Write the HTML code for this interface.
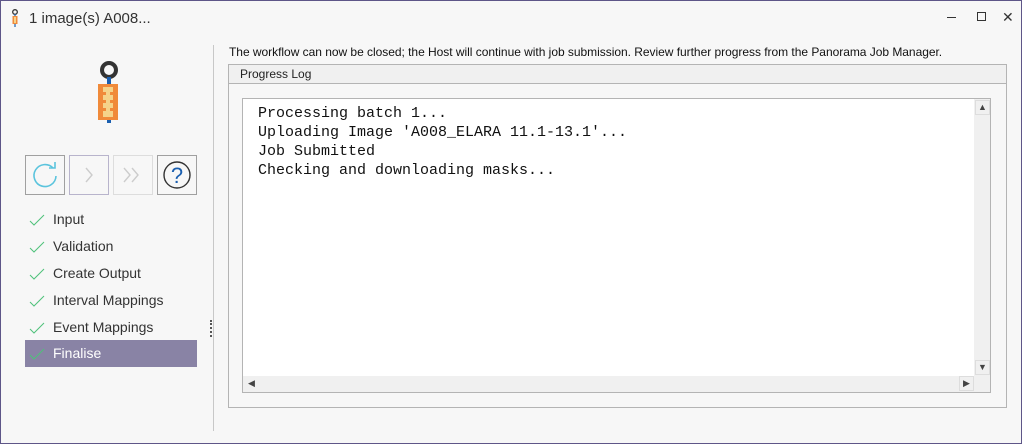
<!DOCTYPE html>
<html><head><style>
*{margin:0;padding:0;box-sizing:border-box}
body{width:1022px;height:444px;background:#f7f7f7;font-family:"Liberation Sans",sans-serif;position:relative;overflow:hidden}
.win{position:absolute;left:0;top:0;width:1022px;height:444px;border:1px solid #5e5688}
.abs{position:absolute}
.btn{position:absolute;top:155px;width:40px;height:40px;border:1px solid #a0a0a0;background:#f7f7f7}
.nav{position:absolute;left:25px;width:172px;height:27px;font-size:14px;color:#333;line-height:27px}
.nav span{position:absolute;left:28px}
.nav svg{position:absolute;left:4px;top:8px}
.log{font-family:"Liberation Mono","DejaVu Sans Mono",monospace;font-size:15px;color:#111;line-height:19px}
.sb{position:absolute;width:15px;height:15px;border:1px solid #ddd;font-size:9px;color:#444;text-align:center;line-height:13px;background:#f0f0f0}
</style></head><body>
<div class="win"></div>
<svg class="abs" style="left:11px;top:9px" width="8" height="18" viewBox="0 0 8 18"><circle cx="4" cy="3" r="2.3" fill="none" stroke="#333" stroke-width="1.3"/><rect x="3.4" y="5" width="1.2" height="13" fill="#1a5fb0"/><rect x="1.5" y="7" width="5" height="8" fill="#f08a3a"/><rect x="3" y="8" width="2" height="6" fill="#f5d38a"/></svg>
<div class="abs" style="left:29px;top:10px;font-size:15px;color:#333">1 image(s) A008...</div>
<div class="abs" style="left:947px;top:17px;width:9px;height:1px;background:#333"></div>
<div class="abs" style="left:977px;top:12px;width:9px;height:9px;border:1px solid #333"></div>
<div class="abs" style="left:1002px;top:9px;font-size:14px;color:#333">✕</div>
<svg class="abs" style="left:98px;top:60px" width="22" height="64" viewBox="0 0 22 64"><circle cx="11" cy="10" r="7" fill="none" stroke="#333" stroke-width="4"/><rect x="9" y="17" width="4" height="46" fill="#1a5fb0"/><rect x="0" y="24" width="20" height="36" fill="#f08a3a"/><rect x="5" y="27" width="10" height="30" fill="#f5d38a"/><rect x="5" y="32" width="3" height="3" fill="#f08a3a"/><rect x="12" y="32" width="3" height="3" fill="#f08a3a"/><rect x="5" y="40" width="3" height="3" fill="#f08a3a"/><rect x="12" y="40" width="3" height="3" fill="#f08a3a"/><rect x="5" y="48" width="3" height="3" fill="#f08a3a"/><rect x="12" y="48" width="3" height="3" fill="#f08a3a"/></svg>
<div class="btn" style="left:25px"><svg width="38" height="38"><path d="M27 12 A11 11 0 1 0 30 20" fill="none" stroke="#5bc4dd" stroke-width="1.6"/><path d="M23 12 H29 V6" fill="none" stroke="#5bc4dd" stroke-width="1.6"/></svg></div>
<div class="btn" style="left:69px;border-color:#b8b4cc"><svg width="38" height="38"><path d="M16 12 L22 19 L16 26" fill="none" stroke="#ccc" stroke-width="1.4"/></svg></div>
<div class="btn" style="left:113px;border-color:#ddd"><svg width="38" height="38"><path d="M10 12 L16 19 L10 26 M18 12 L24 19 L18 26" fill="none" stroke="#ccc" stroke-width="1.4"/></svg></div>
<div class="btn" style="left:157px"><svg width="38" height="38"><circle cx="19" cy="19" r="13" fill="none" stroke="#333" stroke-width="1.4"/><text x="19" y="27" text-anchor="middle" font-size="22" fill="#1a5fb0" font-family="Liberation Sans">?</text></svg></div>
<div class="nav" style="top:206px"><svg width="16" height="12"><path d="M1 7 L5 11 L15 1" fill="none" stroke="#4ec27a" stroke-width="1"/></svg><span>Input</span></div>
<div class="nav" style="top:233px"><svg width="16" height="12"><path d="M1 7 L5 11 L15 1" fill="none" stroke="#4ec27a" stroke-width="1"/></svg><span>Validation</span></div>
<div class="nav" style="top:260px"><svg width="16" height="12"><path d="M1 7 L5 11 L15 1" fill="none" stroke="#4ec27a" stroke-width="1"/></svg><span>Create Output</span></div>
<div class="nav" style="top:287px"><svg width="16" height="12"><path d="M1 7 L5 11 L15 1" fill="none" stroke="#4ec27a" stroke-width="1"/></svg><span>Interval Mappings</span></div>
<div class="nav" style="top:314px"><svg width="16" height="12"><path d="M1 7 L5 11 L15 1" fill="none" stroke="#4ec27a" stroke-width="1"/></svg><span>Event Mappings</span></div>
<div class="nav" style="top:340px;background:#8983a5;color:#fff"><svg width="16" height="12"><path d="M1 7 L5 11 L15 1" fill="none" stroke="#4ec27a" stroke-width="1"/></svg><span>Finalise</span></div>
<div class="abs" style="left:210px;top:320px;width:2px;height:17px;border-left:2px dotted #555"></div>
<div class="abs" style="left:213px;top:45px;width:1px;height:386px;background:#c8c8c8"></div>
<div class="abs" style="left:229px;top:45px;font-size:12px;color:#111;letter-spacing:-0.03px">The workflow can now be closed; the Host will continue with job submission. Review further progress from the Panorama Job Manager.</div>
<div class="abs" style="left:228px;top:64px;width:779px;height:344px;border:1px solid #b4b4b4"></div>
<div class="abs" style="left:229px;top:65px;width:777px;height:19px;background:#f0f0f0;border-bottom:1px solid #b4b4b4;font-size:12px;color:#222;padding:2px 0 0 11px">Progress Log</div>
<div class="abs" style="left:242px;top:98px;width:749px;height:295px;border:1px solid #b4b4b4;background:#fff"></div>
<div class="abs log" style="left:258px;top:104px">Processing batch 1...<br>Uploading Image 'A008_ELARA 11.1-13.1'...<br>Job Submitted<br>Checking and downloading masks...</div>
<div class="abs" style="left:974px;top:99px;width:16px;height:293px;background:#f0f0f0"></div>
<div class="abs" style="left:243px;top:376px;width:731px;height:16px;background:#f0f0f0"></div>
<div class="sb" style="left:975px;top:100px">▲</div>
<div class="sb" style="left:975px;top:360px">▼</div>
<div class="sb" style="left:244px;top:376px;border-color:transparent">◀</div>
<div class="sb" style="left:959px;top:376px">▶</div>
</body></html>
